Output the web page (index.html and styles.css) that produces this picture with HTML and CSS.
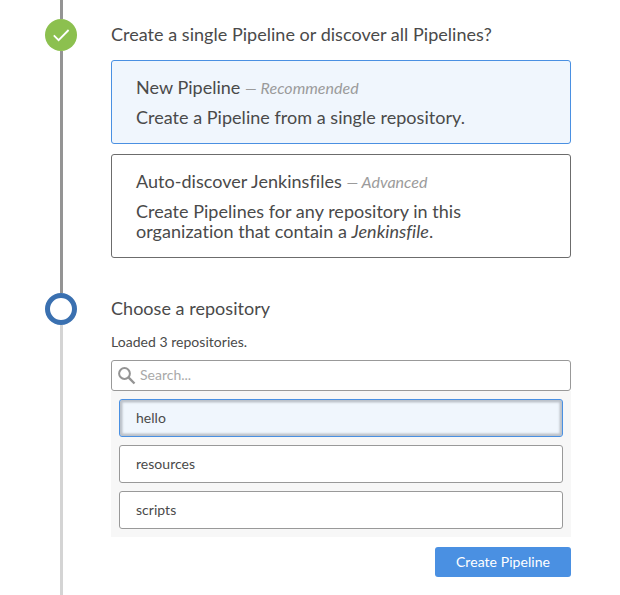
FILE: index.html
```html
<!DOCTYPE html>
<html lang="en">
<head>
<meta charset="utf-8">
<title>Create Pipeline</title>
<link rel="stylesheet" href="styles.css">
</head>
<body>
<main class="flow">
  <section class="step step-discover">
    <div class="rail">
      <span class="line line-lead"></span>
      <svg class="marker" viewBox="0 0 32 32"><circle cx="16" cy="16" r="16" fill="#8cc04f"/><path d="M8.8 16.3l4.8 4.8L23.6 11" fill="none" stroke="#fff" stroke-width="1.8"/></svg>
      <span class="line line-rest"></span>
    </div>
    <div class="content">
      <h2 class="title">Create a single Pipeline or discover all Pipelines?</h2>
      <div class="option selected">
        <p class="option-name">New Pipeline <em class="hint">— Recommended</em></p>
        <p>Create a Pipeline from a single repository.</p>
      </div>
      <div class="option">
        <p class="option-name">Auto-discover Jenkinsfiles <em class="hint">— Advanced</em></p>
        <p>Create Pipelines for any repository in this<br>organization that contain a <em>Jenkinsfile</em>.</p>
      </div>
    </div>
  </section>
  <section class="step step-repository">
    <div class="rail">
      <svg class="marker" viewBox="0 0 32 32"><circle cx="16" cy="16" r="13.5" fill="#fff" stroke="#3a70b0" stroke-width="5"/></svg>
      <span class="line line-rest line-pending"></span>
    </div>
    <div class="content">
      <h2 class="title">Choose a repository</h2>
      <p class="status">Loaded 3 repositories.</p>
      <label class="search">
        <svg class="search-icon" viewBox="0 0 18 18"><g fill="none" stroke="#949494"><circle cx="6.5" cy="6.5" r="5.4" stroke-width="2"/><path d="M10.7 10.7l5.8 5.8" stroke-width="2.4"/></g></svg>
        <input class="search-input" type="text" placeholder="Search...">
      </label>
      <ul class="repos">
        <li class="repo focused">hello</li>
        <li class="repo">resources</li>
        <li class="repo">scripts</li>
      </ul>
      <button class="create" type="button">Create Pipeline</button>
    </div>
  </section>
</main>
</body>
</html>
```

FILE: styles.css
```css
* {
  box-sizing: border-box;
}

body {
  margin: 0;
  background: #fff;
  color: #4a4a4a;
  font: 18px/20px Lato, "Liberation Sans", sans-serif;
  font-variant-ligatures: none;
  letter-spacing: 0.03px;
}

h2,
p,
ul {
  margin: 0;
  padding: 0;
}

.flow {
  display: flex;
  flex-direction: column;
  height: 595px;
  width: 571px;
  padding-left: 45px;
  overflow: hidden;
}

.step {
  display: grid;
  grid-template-columns: 32px 460px;
  column-gap: 34px;
}

.step-discover {
  height: 293px;
}

.step-repository {
  height: 302px;
}

.rail {
  display: flex;
  flex-direction: column;
}

.line {
  width: 3px;
  margin-left: 15px;
  background: #949494;
}

.line-lead {
  height: 19px;
}

.line-rest {
  flex: 1;
}

.line-pending {
  background: #d4d4d4;
}

.marker {
  display: block;
  width: 32px;
  height: 32px;
}

.title {
  font-size: 18px;
  font-weight: 400;
  line-height: 20px;
}

.step-discover .content {
  padding-top: 24px;
}

.step-repository .content {
  display: flex;
  flex-direction: column;
  padding-top: 5px;
}

.option {
  margin-top: 10px;
  padding: 16px 24px;
  border: 1px solid #6c6c6c;
  border-radius: 3px;
}

.title + .option {
  margin-top: 16px;
}

.option.selected {
  border-color: #4a90e2;
  background: #f0f6fd;
}

.option-name {
  margin-bottom: 10px;
}

.hint {
  color: #9b9b9b;
  font-size: 16px;
  line-height: 1;
}

.status {
  margin-top: 14px;
  font-size: 14px;
}

.search {
  display: flex;
  align-items: center;
  height: 31px;
  margin-top: 8px;
  padding-left: 6px;
  border: 1px solid #999;
  border-radius: 3px;
}

.search-icon {
  width: 18px;
  height: 18px;
  margin-right: 4px;
}

.search-input {
  flex: 1;
  padding: 0 0 2px;
  border: 0;
  outline: 0;
  background: transparent;
  color: inherit;
  font: 14px/20px Lato, "Liberation Sans", sans-serif;
}

.search-input::placeholder {
  color: #a9a9a9;
}

.repos {
  display: flex;
  flex-direction: column;
  gap: 8px;
  padding: 8px;
  background: #f7f7f7;
  list-style: none;
}

.repo {
  height: 38px;
  padding: 8px 16px;
  border: 1px solid #999;
  border-radius: 3px;
  background: #fff;
  font-size: 14px;
}

.repo.focused {
  border-color: #4a90e2;
  background: #f0f6fd;
  box-shadow: inset 0 0 2px 2.5px #bcc2ca;
}

.create {
  align-self: flex-end;
  width: 136px;
  height: 30px;
  margin-top: 10px;
  padding: 0;
  border: 0;
  border-radius: 3px;
  background: #4a90e2;
  color: #fff;
  font: 14px/20px Lato, "Liberation Sans", sans-serif;
  letter-spacing: 0.06px;
}
```
